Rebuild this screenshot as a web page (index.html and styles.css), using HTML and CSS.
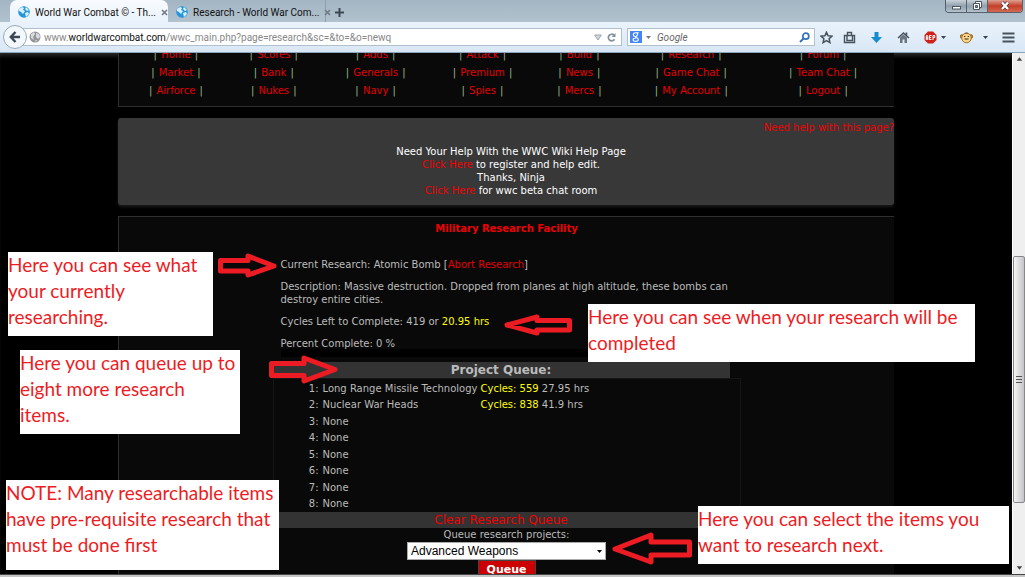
FILE: index.html
```html
<!DOCTYPE html>
<html lang="en">
<head>
<meta charset="utf-8">
<title>World War Combat - Research</title>
<link rel="stylesheet" href="styles.css">
</head>
<body>
<div class="window">
  <header class="tabstrip">
    <div class="tab tab-active">
      <svg class="favicon" viewBox="0 0 12 12"><circle cx="6" cy="6" r="5.8" fill="#2795dc"/><path d="M1 3l3-2 2 1-1 2 2 1-2 3-2-2-2-1zM8 1l3 3-2 1-2-2zM7 7l3-1 1 2-3 3z" fill="#d9f1fb"/></svg>
      <span class="tab-title">World War Combat © - Th...</span>
      <button class="tab-close" aria-label="Close tab"><svg viewBox="0 0 7 7"><path d="M1 1l5 5M6 1L1 6" stroke="#6d7883" stroke-width="1.5"/></svg></button>
    </div>
    <div class="tab">
      <svg class="favicon" viewBox="0 0 12 12"><circle cx="6" cy="6" r="5.8" fill="#2795dc"/><path d="M1 3l3-2 2 1-1 2 2 1-2 3-2-2-2-1zM8 1l3 3-2 1-2-2zM7 7l3-1 1 2-3 3z" fill="#d9f1fb"/></svg>
      <span class="tab-title">Research - World War Com...</span>
      <button class="tab-close" aria-label="Close tab"><svg viewBox="0 0 7 7"><path d="M1 1l5 5M6 1L1 6" stroke="#6d7883" stroke-width="1.5"/></svg></button>
    </div>
    <button class="tab-new" aria-label="New tab"><svg viewBox="0 0 9 9"><path d="M4.500 0v9M0 4.500h9" stroke="#3c4854" stroke-width="2"/></svg></button>
    <div class="window-buttons">
      <button class="win" aria-label="Minimize"><svg viewBox="0 0 20 13"><rect x="6.500" y="6.500" width="8" height="2.500" fill="#fff" stroke="#4b5560"/></svg></button>
      <button class="win" aria-label="Restore"><svg viewBox="0 0 20 13"><path d="M8.500 1.500h6v6h-6z" fill="#fff" stroke="#4b5560"/><path d="M6.500 3.500h6v6h-6z" fill="#fff" stroke="#4b5560"/><path d="M8.500 5.500h2v2h-2z" fill="#8796a3" stroke="#4b5560"/></svg></button>
      <button class="win win-close" aria-label="Close"><svg viewBox="0 0 34 13"><path d="M14 2.500l6 6.500M20 2.500l-6 6.500" stroke="#5e3030" stroke-width="4"/><path d="M14 2.500l6 6.500M20 2.500l-6 6.500" stroke="#fff" stroke-width="2.400"/></svg></button>
    </div>
  </header>

  <div class="toolbar">
    <button class="back" aria-label="Back"><svg viewBox="0 0 12 12"><path d="M6.500 1L1.800 6l4.700 5M2 6h9" fill="none" stroke="#3b4754" stroke-width="2.400"/></svg></button>
    <div class="address">
      <svg class="globe" viewBox="0 0 12 12"><circle cx="6" cy="6" r="5.500" fill="#939699"/><path d="M2 3l3-2 1 2-2 3 1 3-3-2zM7 2l3 1 1 3-2 2-2-2zM6 9l2 0-1 2z" fill="#d9dbdc"/></svg>
      <span class="url">www.<b>worldwarcombat.com</b>/wwc_main.php?page=research&amp;sc=&amp;to=&amp;o=newq</span>
      <svg class="history" viewBox="0 0 8 7"><path d="M.7 1h6.600L4 6z" fill="#d5dade" stroke="#98a4ae"/></svg>
      <button class="reload" aria-label="Reload"><svg viewBox="0 0 9 9"><path d="M7.500 6.200A3.300 3.300 0 1 1 7 2.200" fill="none" stroke="#84919d" stroke-width="1.700"/><path d="M8.500 0v4H4.600z" fill="#84919d"/></svg></button>
    </div>
    <div class="search">
      <svg class="engine" viewBox="0 0 12 12"><rect width="12" height="12" fill="#4486f5"/><path d="M8.800 1.700H5.600C2.500 2 2.800 5.500 5.400 5.500 8 5.300 8 2.500 6.500 1.800M5.500 5.700c0 1.300 2.800 1 2.800 2.800 0 2.400-5.200 2.400-5.200.2 0-1.200 1.400-1.700 2.900-1.700" fill="none" stroke="#fff" stroke-width="1.100"/></svg>
      <svg class="caret" viewBox="0 0 5 3"><path d="M0 0h5L2.500 3z" fill="#737c84"/></svg>
      <input class="search-input" type="text" placeholder="Google" aria-label="Search">
      <button class="go" aria-label="Search"><svg viewBox="0 0 11 11"><circle cx="6.800" cy="4.200" r="3" fill="none" stroke="#3573b5" stroke-width="1.700"/><path d="M4.500 6.500L1 10" stroke="#3573b5" stroke-width="2"/></svg></button>
    </div>
    <div class="tools">
      <button class="tool tool-star" aria-label="Bookmark"><svg viewBox="0 0 13 13"><path d="M6.500 1.200l1.600 3.500 3.900.4-2.900 2.600.8 3.900-3.400-2-3.400 2 .8-3.900L1 5.100l3.900-.4z" fill="none" stroke="#46525e" stroke-width="1.500"/></svg></button>
      <button class="tool" aria-label="Bookmarks list"><svg viewBox="0 0 13 13"><path d="M1.500 4.500h10v7h-10zM4.500 4V1.500h4V4M4 5v4.500h5.500V5" fill="none" stroke="#46525e" stroke-width="1.400"/></svg></button>
      <button class="tool" aria-label="Downloads"><svg viewBox="0 0 13 13"><path d="M4.500 1h4v5H12l-5.500 6L1 6h3.500z" fill="#168cce"/></svg></button>
      <button class="tool" aria-label="Home"><svg viewBox="0 0 13 13"><path d="M1 7l5.500-5L12 7M9.500 4V1.500" fill="none" stroke="#46525e" stroke-width="1.600"/><path d="M3 6.500l3.500-3 3.500 3V12H7.500V8.500h-2V12H3z" fill="#6a7580"/></svg></button>
      <button class="tool tool-menu" aria-label="Ad blocker"><svg viewBox="0 0 13 13"><path d="M4 .5h5L12.500 4v5L9 12.500H4L.5 9V4z" fill="#cf2019"/><path d="M2.300 9V5l.7-.8.8.8v4M2.300 7h1.500M7.500 4.500H5.500v4h2M5.500 6.500h1.700M9 9V4.500h1.800v2H9" fill="none" stroke="#fff"/></svg><svg class="caret" viewBox="0 0 5 3"><path d="M0 0h5L2.500 3z" fill="#39434d"/></svg></button>
      <button class="tool tool-menu tool-monkey" aria-label="User scripts"><svg viewBox="0 0 13 13"><circle cx="2" cy="5.500" r="1.700" fill="#e4a747" stroke="#805116"/><circle cx="11" cy="5.500" r="1.700" fill="#e4a747" stroke="#805116"/><circle cx="6.500" cy="7" r="4.800" fill="#f8d48a" stroke="#a8701f"/><path d="M4 2.500q2.500-2 5 0z" fill="#73451b"/><path d="M4 5.500h1.300M7.700 5.500H9M4.500 8h4" stroke="#422b13" stroke-width="1.200"/></svg><svg class="caret" viewBox="0 0 5 3"><path d="M0 0h5L2.500 3z" fill="#39434d"/></svg></button>
      <button class="tool" aria-label="Menu"><svg viewBox="0 0 13 13"><path d="M.5 2.500h12M.5 6.500h12M.5 10.500h12" stroke="#46525e" stroke-width="2"/></svg></button>
    </div>
  </div>

  <div class="viewport">
    <main class="page">
      <div class="column">
        <nav class="menu">
          <span>| <a href="#">Home</a> |</span><span>| <a href="#">Scores</a> |</span><span>| <a href="#">Adds</a> |</span><span>| <a href="#">Attack</a> |</span><span>| <a href="#">Build</a> |</span><span>| <a href="#">Research</a> |</span><span>| <a href="#">Forum</a> |</span>
          <span>| <a href="#">Market</a> |</span><span>| <a href="#">Bank</a> |</span><span>| <a href="#">Generals</a> |</span><span>| <a href="#">Premium</a> |</span><span>| <a href="#">News</a> |</span><span>| <a href="#">Game Chat</a> |</span><span>| <a href="#">Team Chat</a> |</span>
          <span>| <a href="#">Airforce</a> |</span><span>| <a href="#">Nukes</a> |</span><span>| <a href="#">Navy</a> |</span><span>| <a href="#">Spies</a> |</span><span>| <a href="#">Mercs</a> |</span><span>| <a href="#">My Account</a> |</span><span>| <a href="#">Logout</a> |</span>
        </nav>

        <section class="notice">
          <a class="notice-help" href="#">Need help with this page?</a>
          <p class="notice-text">Need Your Help With the WWC Wiki Help Page<br><a href="#">Click Here</a> to register and help edit.<br>Thanks, Ninja<br><a href="#">Click Here</a> for wwc beta chat room</p>
        </section>

        <section class="facility">
          <h1 class="facility-title">Military Research Facility</h1>
          <div class="research">
            <div class="details">
              <p>Current Research: Atomic Bomb [<a href="#">Abort Research</a>]</p>
              <p>Description: Massive destruction. Dropped from planes at high altitude, these bombs can<br>destroy entire cities.</p>
              <p>Cycles Left to Complete: 419 or <span class="hot">20.95 hrs</span></p>
              <p>Percent Complete: 0 %</p>
              <div class="progress"></div>
            </div>
            <h2 class="bar bar-title">Project Queue:</h2>
            <div class="queue-box">
              <table class="queue">
                <tr><td>1:</td><td>Long Range Missile Technology</td><td><span class="hot">Cycles: 559</span> 27.95 hrs</td></tr>
                <tr><td>2:</td><td>Nuclear War Heads</td><td><span class="hot">Cycles: 838</span> 41.9 hrs</td></tr>
                <tr><td>3:</td><td>None</td><td></td></tr>
                <tr><td>4:</td><td>None</td><td></td></tr>
                <tr><td>5:</td><td>None</td><td></td></tr>
                <tr><td>6:</td><td>None</td><td></td></tr>
                <tr><td>7:</td><td>None</td><td></td></tr>
                <tr><td>8:</td><td>None</td><td></td></tr>
              </table>
            </div>
            <div class="bar"><a href="#">Clear Research Queue</a></div>
            <form class="add">
              <label for="project">Queue research projects:</label>
              <div class="select-wrap">
                <select id="project"><option>Advanced Weapons</option></select>
                <svg class="select-caret" viewBox="0 0 5 3"><path d="M0 0h5L2.500 3z" fill="#000"/></svg>
              </div>
              <button class="submit" type="button">Queue</button>
            </form>
          </div>
        </section>
      </div>
    </main>
    <div class="scrollbar">
      <svg class="arrow-end" viewBox="0 0 13 12"><path d="M4 8l3-4 3 4z" fill="#444"/></svg>
      <div class="track"><div class="thumb"><svg viewBox="0 0 6 7"><path d="M0 .5h6M0 3.500h6M0 6.500h6" stroke="#555"/></svg></div></div>
      <svg class="arrow-end" viewBox="0 0 13 12"><path d="M4 4h6L7 8z" fill="#444"/></svg>
    </div>
  </div>
  <footer class="edge"></footer>

  <div class="note note-current">Here you can see what<br>your currently<br>researching.</div>
  <div class="note note-queue">Here you can queue up to<br>eight more research<br>items.</div>
  <div class="note note-prereq">NOTE: Many researchable items<br>have pre-requisite research that<br>must be done first</div>
  <div class="note note-when">Here you can see when your research will be<br>completed</div>
  <div class="note note-select">Here you can select the items you<br>want to research next.</div>

  <svg class="pointer pointer-current" viewBox="0 0 60 26"><path d="M2.500 7.500H30V3L56 13 30 22V18H2.500z"/></svg>
  <svg class="pointer pointer-queue" viewBox="0 0 70 30"><path d="M2.500 9.500H35V4L66 15.500 35 27V21.500H2.500z"/></svg>
  <svg class="pointer pointer-when" viewBox="0 0 70 22"><path d="M66.500 6.500H34V3L4 11 34 19V16H66.500z"/></svg>
  <svg class="pointer pointer-select" viewBox="0 0 82 34"><path d="M78.500 10H40V3L4 17 40 30V23H78.500z"/></svg>
</div>
</body>
</html>
```
FILE: styles.css
```css
* { box-sizing: border-box; }
html, body { height: 100%; }
body { margin: 0; background: #000; font-family: "DejaVu Sans", Verdana, sans-serif; font-size: 10px; color: #bbb; }
button { padding: 0; border: 0; background: none; font: inherit; }
svg { display: block; }
a { color: #e60000; text-decoration: none; }
p, h1, h2 { margin: 0; }

.window { position: relative; display: flex; flex-direction: column; height: 100vh; overflow: hidden; }

/* Browser tabs */
.tabstrip { display: flex; flex: none; height: 22px; padding-left: 10px; background: linear-gradient(#a3b5c3, #b2c2cf); font-family: Roboto, sans-serif; color: #111; }
.tab { display: flex; align-items: center; gap: 5px; width: 158px; padding: 2px 8px 0; border-right: 1px solid #8fa0ae; }
.tab-active { border: 0; border-radius: 7px 7px 0 0; background: linear-gradient(#f8fbfe, #e9f2fb); }
.favicon { flex: none; width: 12px; height: 12px; }
.tab-title { flex: 1; white-space: nowrap; }
.tab-close svg { width: 7px; height: 7px; }
.tab-new { padding: 2px 9px 0; }
.tab-new svg { width: 9px; height: 9px; }
.window-buttons { display: flex; height: 13px; margin-left: auto; margin-right: 2px; border: 1px solid #56616c; border-top: 0; border-radius: 0 0 4px 4px; overflow: hidden; }
.win { border-right: 1px solid #56616c; background: linear-gradient(#c8d2da, #91a0ac 50%, #b4c2cd); }
.win svg { width: 20px; height: 13px; }
.win-close { border: 0; background: linear-gradient(#dca294, #c33f28 50%, #d46a50); }
.win-close svg { width: 34px; }

/* Navigation toolbar */
.toolbar { display: flex; flex: none; align-items: center; height: 31px; padding: 0 10px 0 3px; border-bottom: 1px solid #8ca4b8; background: linear-gradient(#eaf3fc, #d9e7f5); font-family: Roboto, sans-serif; }
.back { z-index: 1; display: grid; place-items: center; width: 24px; height: 24px; border: 1px solid #98a9b9; border-radius: 50%; background: #f3f8fd; }
.back svg { width: 12px; height: 12px; }
.address { display: flex; flex: 1; align-items: center; height: 18px; margin-left: -4px; padding: 0 5px 0 5px; border: 1px solid #b0c0cf; background: #fff; color: #888; }
.globe { width: 12px; height: 12px; margin-right: 3px; }
.url { flex: 1; white-space: nowrap; }
.url b { font-weight: 400; color: #111; }
.history { width: 8px; height: 7px; margin-right: 5px; }
.reload svg { width: 9px; height: 9px; }
.search { display: flex; align-items: center; width: 188px; height: 18px; margin-left: 5px; padding: 0 4px 0 2px; border: 1px solid #b0c0cf; background: #fff; }
.engine { width: 12px; height: 12px; }
.caret { width: 5px; height: 3px; margin: 0 4px; }
.search-input { flex: 1; min-width: 0; padding: 0 2px; border: 0; background: none; font: italic 10px Roboto, sans-serif; }
.search-input::placeholder { color: #666; opacity: 1; }
.go svg { width: 11px; height: 11px; }
.tools { display: flex; align-items: center; gap: 14px; margin-left: 5px; }
.tool svg { width: 13px; height: 13px; }
.tool-star { margin-right: -4px; }
.tool-menu { display: flex; align-items: center; }
.tool-menu .caret { width: 5px; height: 3px; margin: 0 0 0 4px; }
.tool-monkey .caret { margin-left: 10px; }

/* Page area */
.viewport { display: flex; flex: 1; min-height: 0; }
.page { flex: 1; min-width: 0; overflow: hidden; background: #000; box-shadow: inset 0 5px 5px -3px #333; }
.column { max-width: 776px; margin: -7px auto 0; }
.menu { display: grid; grid-template-columns: 114fr 82fr 122fr 92fr 102fr 122fr 142fr; padding-bottom: 6px; border: 1px solid #2f2f2f; border-width: 0 0 1px 1px; background: #090909; line-height: 18px; text-align: center; color: #9aba8a; }
.menu a { padding: 0 1px; }
.notice { margin-top: 11px; padding: 3px 0 9px; border-radius: 3px; background: #383838; box-shadow: 0 2px 3px #1a1a1a; line-height: 13px; text-align: center; color: #fff; }
.notice a { color: #f00000; }
.notice-help { display: block; text-align: right; }
.notice-text { padding: 11px 0 0 10px; }
.notice { padding-bottom: 8px; }

.facility { height: 480px; margin-top: 11px; border: 1px solid #2f2f2f; border-width: 1px 0 0 1px; background: #090909; }
.facility-title { padding-top: 5px; font-size: 10px; line-height: 13px; text-align: center; color: #f00000; }
.research { max-width: 468px; margin: 23px auto 0; line-height: 13px; }
.details { padding-left: 8px; white-space: nowrap; }
.details p { margin-bottom: 9px; }
.details .progress { height: 8px; margin: -10px 10px 5px 0; background: #000; }
.hot { color: #ff0; }
.bar { height: 16px; margin-right: 11px; background: #333; font-size: 12px; line-height: 16px; text-align: center; }
.bar a { color: #f00000; }
.bar-title { font-weight: 700; }
.queue-box { padding-top: 1px; border: 1px solid #151515; border-bottom: 0; }
.queue { height: 132px; border-collapse: collapse; }
.queue td { padding: 0; white-space: nowrap; }
.queue td:nth-child(1) { width: 49px; padding-right: 4px; text-align: right; }
.queue td:nth-child(2) { width: 158px; }
.add { display: flex; flex-direction: column; align-items: center; }
.add label { line-height: 14px; }
.select-wrap { position: relative; }
.select-wrap select { display: block; width: 199px; height: 18px; padding: 0 3px; border: 1px solid #aaa; border-radius: 0; appearance: none; background: #fff; color: #000; font: 12px "Liberation Sans", Arial, sans-serif; }
.select-caret { position: absolute; top: 8px; right: 4px; width: 5px; height: 3px; }
.submit { width: 58px; height: 18px; border: 1px solid #444; background: #c00; font-size: 11px; font-weight: 700; color: #fff; }

/* Scrollbar */
.scrollbar { display: flex; flex: none; flex-direction: column; width: 13px; border-left: 1px solid #fff; background: #efefef; }
.arrow-end { width: 12px; height: 12px; }
.track { flex: 1; padding-top: 191px; }
.thumb { display: grid; place-items: center; height: 247px; border: 1px solid #888; border-radius: 2px; background: linear-gradient(90deg, #f5f5f5, #c4c4c8); }
.thumb svg { width: 6px; height: 7px; }
.edge { flex: none; height: 3px; border-top: 1px solid #444; background: #c5c5c5; }

/* Callouts laid over the page */
.note { position: absolute; background: #fff; color: #ed1c24; font: 19px/26px Lato, Carlito, sans-serif; white-space: nowrap; }
.note-current { left: 8px; top: 252px; width: 205px; height: 84px; }
.note-queue { left: 20px; top: 350px; width: 220px; height: 84px; }
.note-prereq { left: 6px; top: 480px; width: 273px; height: 90px; }
.note-when { left: 588px; top: 304px; width: 387px; height: 58px; }
.note-select { left: 698px; top: 506px; width: 311px; height: 58px; }
.pointer { position: absolute; fill: none; stroke: #ed1c24; stroke-width: 5; stroke-linejoin: round; }
.pointer-current { left: 218px; top: 253px; width: 60px; height: 26px; }
.pointer-queue { left: 269px; top: 354px; width: 70px; height: 30px; }
.pointer-when { left: 503px; top: 314px; width: 70px; height: 22px; }
.pointer-select { left: 611px; top: 532px; width: 82px; height: 34px; }
```
